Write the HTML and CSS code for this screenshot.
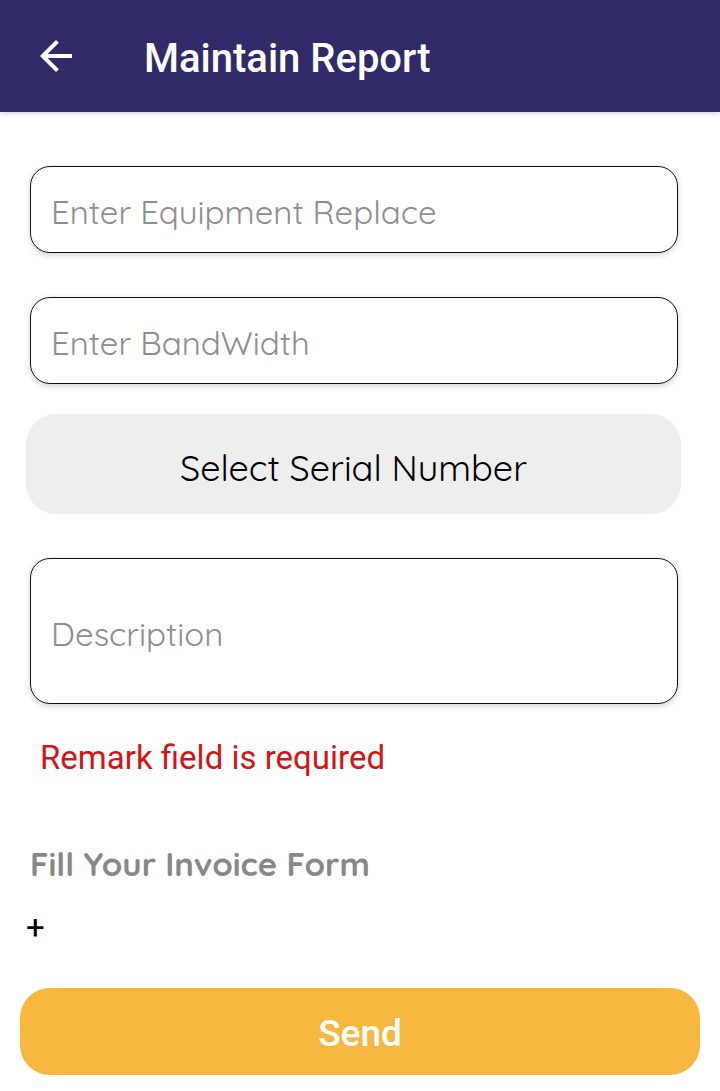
FILE: index.html
```html
<!DOCTYPE html>
<html lang="en">
<head>
<meta charset="utf-8">
<meta name="viewport" content="width=device-width, initial-scale=1">
<title>Maintain Report</title>
<link rel="stylesheet" href="styles.css">
</head>
<body>
<header class="bar">
  <button class="back" type="button" aria-label="Back">
    <svg class="back-icon" viewBox="4 4 16 16" aria-hidden="true"><path fill="currentColor" d="M20 11H7.830l5.590-5.590L12 4l-8 8 8 8 1.410-1.410L7.830 13H20z"/></svg>
  </button>
  <h1 class="title">Maintain Report</h1>
</header>
<main>
  <form class="form">
    <div class="fields">
      <input class="field" type="text" placeholder="Enter Equipment Replace" aria-label="Equipment replace">
      <input class="field" type="text" placeholder="Enter BandWidth" aria-label="Bandwidth">
      <button class="select" type="button">Select Serial Number</button>
      <input class="field field-tall" type="text" placeholder="Description" aria-label="Description">
    </div>
    <p class="error" role="alert">Remark field is required</p>
    <h2 class="subtitle">Fill Your Invoice Form</h2>
    <button class="add" type="button" aria-label="Add invoice item">+</button>
    <button class="send" type="submit">Send</button>
  </form>
</main>
</body>
</html>
```
FILE: styles.css
```css
* { box-sizing: border-box; }
body { margin: 0; background: #fff; font-family: Quicksand, Lato, sans-serif; }
button { border: 0; padding: 0; background: none; font: inherit; color: inherit; cursor: pointer; }
.bar { display: flex; align-items: center; gap: 72px; height: 112px; padding: 6px 40px 0; background: #312a68; color: #fff; box-shadow: 0 1px 5px rgba(49, 42, 104, .25); }
.back { display: flex; padding-bottom: 6px; }
.back-icon { width: 32px; height: 32px; }
.title { margin: 0; font: 500 40px/48px Roboto, sans-serif; }
.form { display: flex; flex-direction: column; padding: 54px 20px 16px; }
.fields { display: flex; flex-direction: column; padding: 0 22px 0 10px; }
.field { width: 100%; height: 87px; margin-bottom: 44px; padding: 4px 20px 0; border: 1px solid #111; border-radius: 20px; background: #fff; font: 400 33px/44px Quicksand, Lato, sans-serif; color: #000; box-shadow: 0 2px 6px rgba(0, 0, 0, .18); }
.field::placeholder { color: #8e8e8e; opacity: 1; }
.select { height: 100px; margin: -14px -3px 44px -4px; padding-top: 6px; border-radius: 30px; background: #eee; font-size: 36px; font-weight: 400; color: #000; }
.field-tall { height: 146px; margin-bottom: 34px; }
.error { margin: 0 20px; font: 400 33px/40px Roboto, sans-serif; color: #d51515; }
.subtitle { margin: 64px 10px 0; font-size: 33px; line-height: 44px; font-weight: 700; color: #888; }
.add { align-self: flex-start; margin: 20px 6px 38px; font: 400 33px/44px Roboto, sans-serif; color: #000; }
.send { height: 87px; padding-top: 4px; border-radius: 30px; background: #f6b83e; font: 500 37px/44px Roboto, sans-serif; color: #fff; }
```
